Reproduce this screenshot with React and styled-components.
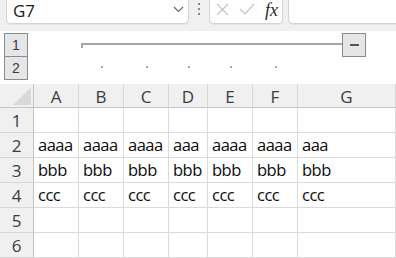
import React from "react";
import styled, { createGlobalStyle } from "styled-components";

const Global = createGlobalStyle`
  html, body { margin: 0; padding: 0; background: #ffffff; overflow: hidden; }
  body { font-family: "Open Sans", "Noto Sans", sans-serif; }
  * { box-sizing: border-box; }
`;

const COLS = [34, 45, 45, 45, 39, 45, 45, 98];
const template = COLS.map((c) => `${c}px`).join(" ");

const Toolbar = styled.div`
  height: 31px;
  background: #f0f0f0;
  display: flex;
  align-items: flex-start;
`;

const Box = styled.div`
  height: 24px;
  background: #ffffff;
  border: 1px solid #d4d4d4;
  border-top: none;
  border-radius: 0 0 5px 5px;
  box-shadow: 0 1px 0 #e2e2e2;
  display: flex;
  align-items: center;
`;

const NameBox = styled(Box)`
  margin-left: 6px;
  width: 183px;
  padding: 0 0 0 6px;
  justify-content: space-between;
`;

const NameText = styled.span`
  font-size: 17px;
  color: #1b1b1b;
  line-height: 1;
  margin-top: -3px;
`;

const Chevron = styled.svg`
  margin-right: 4px;
  margin-top: -4px;
`;

const Grip = styled.div`
  width: 20px;
  height: 24px;
  display: flex;
  flex-direction: column;
  align-items: center;
  gap: 3px;
  padding-top: 3px;
`;

const GripDot = styled.span`
  width: 2px;
  height: 2px;
  background: #8a8a8a;
`;

const FxBox = styled(Box)`
  width: 74px;
  padding: 0 4px 0 6px;
  justify-content: space-between;
`;

const FxText = styled.span`
  font-family: "Liberation Serif", "DejaVu Serif", serif;
  font-style: italic;
  font-size: 18px;
  color: #2a2a2a;
  line-height: 1;
  margin-top: -4px;
`;

const FormulaInput = styled(Box)`
  margin-left: 5px;
  flex: 1;
  border-right: none;
  border-radius: 0 0 0 5px;
`;

const OutlinePanel = styled.div`
  height: 53px;
  background: #ffffff;
  display: flex;
`;

const Levels = styled.div`
  width: 34px;
  padding: 2px 0 0 4px;
  display: flex;
  flex-direction: column;
`;

const LevelButton = styled.div`
  width: 24px;
  height: 24px;
  margin-top: ${(p) => (p.$first ? 0 : "-1px")};
  background: #e6e6e6;
  border: 1.5px solid #868a91;
  display: flex;
  align-items: center;
  justify-content: center;
  font-family: "Liberation Sans", Arial, sans-serif;
  font-size: 14px;
  color: #3a3a3a;
`;

const GroupArea = styled.div`
  flex: 1;
  display: grid;
  grid-template-columns: ${COLS.slice(1).map((c) => `${c}px`).join(" ")};
  grid-template-rows: 26px 27px;
`;

const Bracket = styled.div`
  grid-column: 2 / -1;
  grid-row: 1;
  display: flex;
  align-items: flex-start;
  padding: 2px 30px 0 2px;
`;

const BracketLine = styled.div`
  flex: 1;
  height: 5px;
  margin-top: 10px;
  border-top: 2px solid #a6a6a6;
  border-left: 2px solid #a6a6a6;
`;

const MinusButton = styled.div`
  width: 24px;
  height: 24px;
  background: #e6e6e6;
  border: 1.5px solid #868a91;
  display: flex;
  align-items: center;
  justify-content: center;
`;

const MinusGlyph = styled.span`
  width: 9px;
  height: 2px;
  background: #555;
`;

const DotCell = styled.div`
  grid-row: 2;
  grid-column: ${(p) => p.$col};
  display: flex;
  justify-content: center;
  padding-top: 9px;
`;

const Dot = styled.span`
  width: 2px;
  height: 2px;
  background: #a6a6a6;
`;

const Sheet = styled.div`
  display: grid;
  grid-template-columns: ${template};
  grid-template-rows: 24px repeat(6, 25px);
`;

const HeaderCell = styled.div`
  background: #f0f0f0;
  border-right: 1px solid ${(p) => (p.$rowHead ? "#c4c4c4" : "#d6d6d6")};
  border-bottom: 1px solid ${(p) => (p.$colHead ? "#c4c4c4" : "#d6d6d6")};
  display: flex;
  align-items: center;
  justify-content: center;
  font-size: 17px;
  color: #3c3c3c;
  padding-top: 1px;
`;

const Corner = styled.div`
  background: #f0f0f0;
  border-right: 1px solid #c4c4c4;
  border-bottom: 1px solid #c4c4c4;
  display: flex;
  align-items: flex-end;
  justify-content: flex-end;
  padding: 0 2px 2px 0;
`;

const Cell = styled.div`
  background: #ffffff;
  border-right: 1px solid #dadada;
  border-bottom: 1px solid #dadada;
  display: flex;
  align-items: flex-end;
  padding: 0 0 2px 4px;
  font-size: 16.5px;
  letter-spacing: -0.5px;
  color: #0c0c0c;
  line-height: 20px;
  white-space: nowrap;
  overflow: hidden;
`;

const columns = ["A", "B", "C", "D", "E", "F", "G"];
const data = {
  2: ["aaaa", "aaaa", "aaaa", "aaa", "aaaa", "aaaa", "aaa"],
  3: ["bbb", "bbb", "bbb", "bbb", "bbb", "bbb", "bbb"],
  4: ["ccc", "ccc", "ccc", "ccc", "ccc", "ccc", "ccc"],
};

export default function App() {
  return (
    <>
      <Global />
      <Toolbar>
        <NameBox>
          <NameText>G7</NameText>
          <Chevron width="11" height="7" viewBox="0 0 11 7">
            <path d="M1 1 L5.5 5.5 L10 1" fill="none" stroke="#666" strokeWidth="1.1" />
          </Chevron>
        </NameBox>
        <Grip>
          <GripDot />
          <GripDot />
          <GripDot />
        </Grip>
        <FxBox>
          <svg width="13" height="13" viewBox="0 0 13 13" style={{ marginTop: -4 }}>
            <path d="M1 1 L12 12 M12 1 L1 12" stroke="#c4c4c4" strokeWidth="1.2" fill="none" />
          </svg>
          <svg width="16" height="12" viewBox="0 0 16 12" style={{ marginTop: -5 }}>
            <path d="M1 6 L6 11 L15 1" stroke="#c4c4c4" strokeWidth="1.2" fill="none" />
          </svg>
          <FxText>fx</FxText>
        </FxBox>
        <FormulaInput />
      </Toolbar>
      <OutlinePanel>
        <Levels>
          <LevelButton $first>1</LevelButton>
          <LevelButton>2</LevelButton>
        </Levels>
        <GroupArea>
          <Bracket>
            <BracketLine />
            <MinusButton>
              <MinusGlyph />
            </MinusButton>
          </Bracket>
          {[2, 3, 4, 5, 6].map((c) => (
            <DotCell key={c} $col={c}>
              <Dot />
            </DotCell>
          ))}
        </GroupArea>
      </OutlinePanel>
      <Sheet>
        <Corner>
          <svg width="18" height="18" viewBox="0 0 18 18">
            <path d="M18 0 L18 18 L0 18 Z" fill="#d9d9d9" />
          </svg>
        </Corner>
        {columns.map((c) => (
          <HeaderCell key={c} $colHead>
            {c}
          </HeaderCell>
        ))}
        {[1, 2, 3, 4, 5, 6].map((r) => (
          <React.Fragment key={r}>
            <HeaderCell $rowHead>{r}</HeaderCell>
            {columns.map((c, i) => (
              <Cell key={c}>{data[r] ? data[r][i] : ""}</Cell>
            ))}
          </React.Fragment>
        ))}
      </Sheet>
    </>
  );
}
